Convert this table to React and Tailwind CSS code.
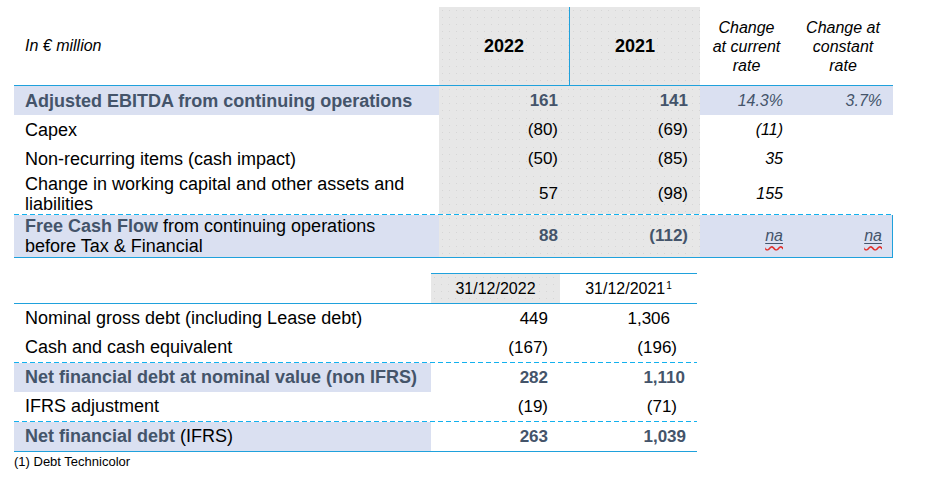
import React from 'react'

// Free cash flow + net debt tables (slide style)

const GRAY = 'bg-[#e7e7e7] bg-[radial-gradient(circle,#d6d6d6_0.7px,transparent_1px)] bg-[length:7px_7px]'
const LAV = 'bg-[#dae0f1]'
const SLATE = 'text-[#44546a]'

const Solid = ({ className = '' }) => <div className={`h-px bg-[#1fa1dc] ${className}`} />
const Dashed = ({ className = '' }) => (
  <div className={`h-px bg-[repeating-linear-gradient(90deg,#13b1ee_0_5px,transparent_5px_8px)] ${className}`} />
)

const topRows = [
  { label: <span className={`font-bold ${SLATE}`}>Adjusted EBITDA from continuing operations</span>, a: '161', b: '141', c: '14.3%', d: '3.7%', hi: true, h: 'h-[29px]' },
  { label: 'Capex', a: '(80)', b: '(69)', c: '(11)', h: 'h-[29px]' },
  { label: 'Non-recurring items (cash impact)', a: '(50)', b: '(85)', c: '35', h: 'h-[29px]' },
  { label: <>Change in working capital and other assets and<br />liabilities</>, a: '57', b: '(98)', c: '155', h: 'h-[41px]' },
]

function TopRow({ row }) {
  const bold = row.hi ? `font-bold ${SLATE}` : ''
  return (
    <div className={`grid grid-cols-[425px_131px_130px_93px_100px] ${row.h}`}>
      <div className={`flex items-center pl-[11px] text-[18px] leading-[20px] whitespace-nowrap ${row.hi ? LAV : ''}`}>
        <span>{row.label}</span>
      </div>
      <div className={`flex items-center justify-end pr-[12px] text-[17px] ${GRAY} ${bold}`}>{row.a}</div>
      <div className={`flex items-center justify-end pr-[12px] text-[17px] ${GRAY} ${bold}`}>{row.b}</div>
      <div className={`flex items-center justify-end pr-[10px] italic ${row.hi ? `${LAV} ${SLATE}` : ''}`}>{row.c}</div>
      <div className={`flex items-center justify-end pr-[11px] italic ${row.hi ? `${LAV} ${SLATE}` : ''}`}>{row.d}</div>
    </div>
  )
}

// spell-check squiggle under "na", as in the source slide
const Na = () => (
  <span className="italic text-[#44546a] underline decoration-wavy decoration-[#e0302c] underline-offset-[4px]">
    <span className="underline decoration-[#44546a] underline-offset-[2px]">na</span>
  </span>
)

const bottomRows = [
  { label: 'Nominal gross debt (including Lease debt)', a: '449', b: '1,306', pb: 'pr-[27px]' },
  { label: 'Cash and cash equivalent', a: '(167)', b: '(196)', pb: 'pr-[20px]', after: 'dashed' },
  { label: <span className={`font-bold ${SLATE}`}>Net financial debt at nominal value (non IFRS)</span>, a: '282', b: '1,110', pb: 'pr-[12px]', hi: true },
  { label: 'IFRS adjustment', a: '(19)', b: '(71)', pb: 'pr-[20px]', after: 'dashed' },
  { label: <><span className={`font-bold ${SLATE}`}>Net financial debt</span> (IFRS)</>, a: '263', b: '1,039', pb: 'pr-[11px]', hi: true, after: 'solid' },
]

export default function App() {
  return (
    <div className="w-[947px] h-[479px] bg-white text-black text-[16px] font-['Liberation_Sans',Arial,sans-serif] pt-[7px] pl-[14px]">
      {/* cash flow table */}
      <div className="w-[879px]">
        <div className="grid grid-cols-[425px_131px_130px_93px_100px] h-[78px]">
          <div className="flex items-center pl-[11px] italic">In € million</div>
          <div className={`flex items-center justify-center text-[18px] font-bold border-r border-[#1fa1dc] ${GRAY}`}>2022</div>
          <div className={`flex items-center justify-center text-[18px] font-bold ${GRAY}`}>2021</div>
          <div className="flex items-center justify-center text-center italic leading-[19px]">Change<br />at current<br />rate</div>
          <div className="flex items-center justify-center text-center italic leading-[19px]">Change at<br />constant<br />rate</div>
        </div>
        <Solid />
        {topRows.map((r, i) => <TopRow key={i} row={r} />)}
        <Dashed />
        <div className="grid grid-cols-[425px_131px_130px_93px_99px] h-[42px] border-r border-[#1fa1dc]">
          <div className={`flex flex-col justify-center pl-[11px] text-[18px] leading-[20px] whitespace-nowrap ${LAV}`}>
            <div><span className={`font-bold ${SLATE}`}>Free Cash Flow</span> from continuing operations</div>
            <div>before Tax &amp; Financial</div>
          </div>
          <div className={`flex items-center justify-end pr-[12px] text-[17px] font-bold ${SLATE} ${GRAY}`}>88</div>
          <div className={`flex items-center justify-end pr-[12px] text-[17px] font-bold ${SLATE} ${GRAY}`}>(112)</div>
          <div className={`flex items-center justify-end pr-[10px] ${LAV}`}><Na /></div>
          <div className={`flex items-center justify-end pr-[10px] ${LAV}`}><Na /></div>
        </div>
        <Solid />
      </div>

      {/* net debt table */}
      <div className="w-[683px] mt-[15px]">
        <Solid className="ml-[417px]" />
        <div className="grid grid-cols-[417px_129px_137px] h-[29px]">
          <div />
          <div className={`flex items-center justify-center ${GRAY}`}>31/12/2022</div>
          <div className="flex items-center justify-center">
            <span>31/12/2021<sup className="text-[10px] ml-[1px] -top-[5px]">1</sup></span>
          </div>
        </div>
        <Solid />
        {bottomRows.map((r, i) => (
          <React.Fragment key={i}>
            <div className="grid grid-cols-[417px_129px_137px] h-[29px]">
              <div className={`flex items-center pl-[11px] text-[18px] whitespace-nowrap ${r.hi ? LAV : ''}`}>
                <span>{r.label}</span>
              </div>
              <div className={`flex items-center justify-end pr-[12px] text-[17px] ${r.hi ? `font-bold ${SLATE}` : ''}`}>{r.a}</div>
              <div className={`flex items-center justify-end text-[17px] ${r.pb} ${r.hi ? `font-bold ${SLATE}` : ''}`}>{r.b}</div>
            </div>
            {r.after === 'dashed' && <Dashed />}
            {r.after === 'solid' && <Solid />}
          </React.Fragment>
        ))}
        <div className="text-[13px] leading-[16px] mt-[2px]">(1) Debt Technicolor</div>
      </div>
    </div>
  )
}
